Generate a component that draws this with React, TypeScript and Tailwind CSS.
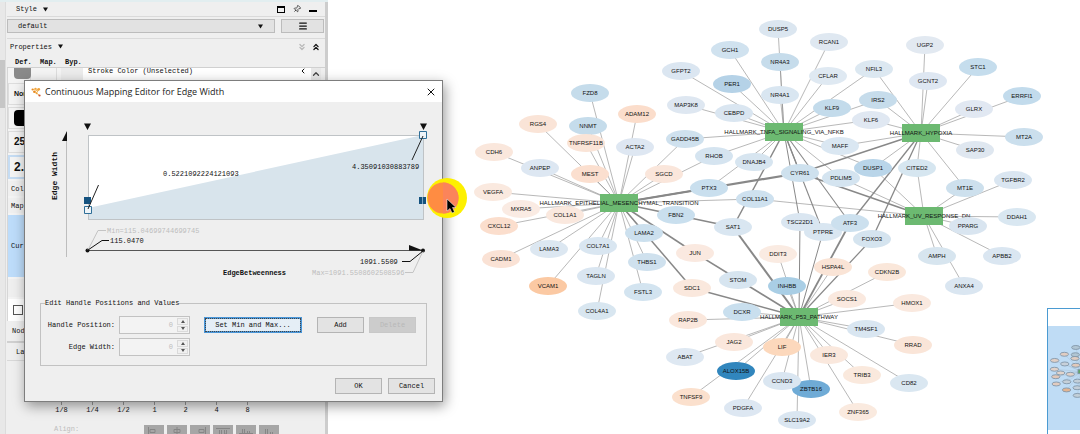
import { useState } from 'react'
import { ChevronLeft, ChevronUp, ChevronsDown, ChevronsUp, Menu, Pin, X } from 'lucide-react'

type GraphNode = [name: string, x: number, y: number, fill: string]
type Edge = [source: string, target: string, width: number]

const NODES: GraphNode[] = [
  ['DUSP5', 778, 29, '#dbe6f0'],
  ['GCH1', 730, 50, '#d0e2ef'],
  ['RCAN1', 829, 42, '#dfe8f1'],
  ['NR4A3', 780, 62, '#c6dceb'],
  ['GFPT2', 681, 71, '#dbe6f1'],
  ['PER1', 732, 84, '#b5d2e7'],
  ['CFLAR', 828, 76, '#dfe9f2'],
  ['NR4A1', 780, 95, '#d9e6f1'],
  ['MAP3K8', 686, 105, '#dee7f1'],
  ['CEBPD', 734, 113, '#dae6f1'],
  ['KLF9', 832, 108, '#c3dbeb'],
  ['NFIL3', 874, 69, '#dce8f1'],
  ['IRS2', 878, 100, '#c6dceb'],
  ['KLF6', 871, 120, '#e0e8f2'],
  ['GADD45B', 685, 139, '#cfe1ee'],
  ['HALLMARK_TNFA_SIGNALING_VIA_NFKB', 784, 132, 'hub'],
  ['UGP2', 925, 45, '#e2e9f1'],
  ['STC1', 978, 67, '#c5dded'],
  ['GCNT2', 928, 81, '#dee7f2'],
  ['ERRFI1', 1022, 96, '#c2dbec'],
  ['GLRX', 974, 109, '#e1e8f2'],
  ['HALLMARK_HYPOXIA', 921, 133, 'hub'],
  ['MT2A', 1024, 137, '#cbdfed'],
  ['SAP30', 975, 150, '#dfe7f0'],
  ['MAFF', 840, 146, '#dae7f2'],
  ['DUSP1', 873, 168, '#b9d5e9'],
  ['CITED2', 917, 168, '#d6e6f0'],
  ['MT1E', 965, 188, '#cde0ed'],
  ['TGFBR2', 1013, 180, '#dae6f1'],
  ['RHOB', 714, 156, '#d5e4f0'],
  ['DNAJB4', 754, 162, '#d7e5f0'],
  ['CYR61', 800, 173, '#cee1ee'],
  ['PDLIM5', 841, 178, '#d4e4f0'],
  ['PTX3', 709, 188, '#c9dfee'],
  ['COL11A1', 755, 199, '#cee1ef'],
  ['FZD8', 590, 93, '#c5dceb'],
  ['ADAM12', 637, 114, '#fbddcb'],
  ['RGS4', 538, 124, '#fae4d7'],
  ['NNMT', 588, 126, '#c5dceb'],
  ['TNFRSF11B', 586, 143, '#fae4d7'],
  ['ACTA2', 635, 147, '#dee7f2'],
  ['CDH6', 494, 152, '#fae7dc'],
  ['ANPEP', 540, 168, '#dde7f2'],
  ['MEST', 590, 174, '#fbdfcf'],
  ['SGCD', 664, 174, '#fae6db'],
  ['VEGFA', 493, 192, '#fae9df'],
  ['MXRA5', 521, 209, '#faebe3'],
  ['HALLMARK_EPITHELIAL_MESENCHYMAL_TRANSITION', 619, 203, 'hub'],
  ['COL1A1', 565, 215, '#fae8de'],
  ['CXCL12', 499, 226, '#fbdecd'],
  ['LAMA3', 549, 249, '#dce7f1'],
  ['COL7A1', 598, 246, '#d9e6f1'],
  ['FBN2', 676, 215, '#c9dfee'],
  ['LAMA2', 644, 233, '#cce0ee'],
  ['THBS1', 647, 262, '#cfe1ee'],
  ['TAGLN', 596, 276, '#dae6f1'],
  ['FSTL3', 643, 292, '#d3e4f0'],
  ['COL4A1', 597, 311, '#d8e6f0'],
  ['VCAM1', 548, 286, '#fbc9a3'],
  ['CADM1', 501, 259, '#fae2d5'],
  ['JUN', 695, 253, '#fae9e0'],
  ['SDC1', 692, 288, '#fae8dd'],
  ['SAT1', 733, 227, '#d9e6f1'],
  ['TSC22D1', 800, 222, '#dae6f1'],
  ['PTPRE', 823, 232, '#d9e6f1'],
  ['ATF3', 850, 223, '#cce0ee'],
  ['HALLMARK_UV_RESPONSE_DN', 924, 216, 'hub'],
  ['PPARG', 968, 226, '#d9e5f0'],
  ['DDAH1', 1017, 217, '#d9e7f1'],
  ['AMPH', 937, 256, '#d7e5ef'],
  ['APBB2', 1002, 256, '#dae6f1'],
  ['ANXA4', 964, 286, '#dae6f1'],
  ['FOXO3', 872, 239, '#d5e4ef'],
  ['CDKN2B', 887, 272, '#fae7da'],
  ['DDIT3', 778, 254, '#faebe2'],
  ['HSPA4L', 833, 267, '#fae4d6'],
  ['STOM', 738, 280, '#d7e5f0'],
  ['INHBB', 787, 286, '#a9cee5'],
  ['SOCS1', 847, 299, '#fae9df'],
  ['HMOX1', 912, 303, '#fae9df'],
  ['DCXR', 742, 312, '#c9dfee'],
  ['RAP2B', 688, 320, '#fae7dc'],
  ['HALLMARK_P53_PATHWAY', 799, 317, 'hub'],
  ['TM4SF1', 866, 329, '#d9e6f1'],
  ['RRAD', 913, 345, '#fae5d8'],
  ['JAG2', 734, 342, '#fae7dc'],
  ['LIF', 782, 347, '#fcd8bc'],
  ['IER3', 829, 355, '#fae8dd'],
  ['ABAT', 685, 357, '#dee8f2'],
  ['ALOX15B', 736, 371, '#3186bd'],
  ['TRIB3', 862, 375, '#fae9dd'],
  ['CD82', 909, 383, '#dae7f1'],
  ['ZBTB16', 811, 389, '#6fabd6'],
  ['CCND3', 782, 381, '#dae6f1'],
  ['TNFSF9', 691, 397, '#fbe0cd'],
  ['PDGFA', 743, 408, '#dde7f2'],
  ['SLC19A2', 797, 420, '#dae6f1'],
  ['ZNF365', 858, 412, '#faeadf'],
]

const HUBS: Record<string, string> = {
  emt: 'HALLMARK_EPITHELIAL_MESENCHYMAL_TRANSITION',
  tnfa: 'HALLMARK_TNFA_SIGNALING_VIA_NFKB',
  hypoxia: 'HALLMARK_HYPOXIA',
  uv: 'HALLMARK_UV_RESPONSE_DN',
  p53: 'HALLMARK_P53_PATHWAY',
}

// thin edges, one list per hub
const MEMBERS: Record<string, string> = {
  emt: 'CDH6 RGS4 FZD8 NNMT TNFRSF11B ADAM12 ACTA2 ANPEP MEST SGCD VEGFA MXRA5 COL1A1 CXCL12 LAMA3 COL7A1 LAMA2 THBS1 TAGLN FSTL3 COL4A1 VCAM1 CADM1 GADD45B RHOB COL11A1',
  tnfa: 'DUSP5 NR4A3 NR4A1 GCH1 RCAN1 PER1 CFLAR CEBPD GFPT2 MAP3K8 GADD45B RHOB DNAJB4 PTX3 MAFF DUSP1 PDLIM5 KLF9 IRS2 KLF6 NFIL3',
  hypoxia: 'NFIL3 IRS2 KLF6 UGP2 GCNT2 STC1 ERRFI1 GLRX MT2A SAP30 CITED2 MT1E MAFF DUSP1',
  uv: 'CITED2 MT1E TGFBR2 DDAH1 PPARG AMPH APBB2 ANXA4 DUSP1 PDLIM5 COL11A1',
  p53: 'HSPA4L DDIT3 INHBB DCXR RAP2B JAG2 ABAT LIF ALOX15B TNFSF9 CCND3 PDGFA SLC19A2 ZBTB16 IER3 TRIB3 ZNF365 CD82 RRAD TM4SF1 HMOX1 SOCS1 CDKN2B',
}

const HEAVY: Edge[] = [
  ['emt', 'CYR61', 2.2],
  ['emt', 'PTX3', 1.4],
  ['emt', 'SAT1', 1.6],
  ['emt', 'JUN', 1.5],
  ['emt', 'SDC1', 1.5],
  ['tnfa', 'SAT1', 1.5],
  ['tnfa', 'CYR61', 1.2],
  ['tnfa', 'TSC22D1', 1],
  ['tnfa', 'PTPRE', 1.1],
  ['tnfa', 'ATF3', 1.1],
  ['hypoxia', 'CYR61', 1.5],
  ['hypoxia', 'ATF3', 1.3],
  ['hypoxia', 'FOXO3', 1.3],
  ['uv', 'CYR61', 1.5],
  ['p53', 'TSC22D1', 1],
  ['p53', 'PTPRE', 1],
  ['p53', 'ATF3', 1.8],
  ['p53', 'FOXO3', 1.2],
  ['p53', 'SAT1', 2],
  ['p53', 'JUN', 1.6],
  ['p53', 'SDC1', 1.6],
]

const EDGES: Edge[] = [
  ...Object.entries(MEMBERS).flatMap(([hub, list]) => list.split(' ').map((name): Edge => [hub, name, 0.6])),
  ...HEAVY,
]

const byName = new Map(NODES.map(n => [n[0], n]))

function Graph({ labels = true }: { labels?: boolean }) {
  return (
    <>
      {EDGES.map(([hub, name, width]) => {
        const a = byName.get(HUBS[hub])!
        const b = byName.get(name)!
        return (
          <line key={hub + name} x1={a[1]} y1={a[2]} x2={b[1]} y2={b[2]} stroke="#888" strokeWidth={width} />
        )
      })}
      {NODES.map(([name, x, y, fill]) => (
        <g key={name}>
          {fill === 'hub' ? (
            <rect x={x - 19} y={y - 9} width={38} height={18} fill="#6cb971" />
          ) : (
            <ellipse cx={x} cy={y} rx={19} ry={9} fill={fill} />
          )}
          {labels && (
            <text x={x} y={y + 2} textAnchor="middle" fill="#111">{name}</text>
          )}
        </g>
      ))}
    </>
  )
}

function MappingChart() {
  return (
    <svg viewBox="25 102 417 188" className="block w-full text-[7px]" fill="#111">
      <path d="M66.5 132V257" stroke="#bdbdbd" />
      <path d="M67 131V141H62Z" />
      <text transform="translate(57 176) rotate(-90)" textAnchor="middle" className="text-[8px] font-bold">Edge Width</text>

      <rect x="88.5" y="135.5" width="335" height="84" fill="#fff" />
      <path d="M88 208L423 135V220H88Z" fill="#d8e4ec" />
      <rect x="88.5" y="135.5" width="335" height="84" fill="none" stroke="#bfc3c6" />
      <path d="M84 123.500H91L87.500 130ZM420 123.500H427L423.500 130Z" />
      <path d="M84 197H91V204H84ZM419 197H426V204H419Z" fill="#14527f" />
      <path d="M422.500 197V204" stroke="#7fa8c4" />
      <path d="M84.500 206.500H91.500V213.500H84.500ZM419.500 131.500H426.500V138.500H419.500Z" fill="#eef4f8" stroke="#2f6f98" />
      <path d="M88 209L98.500 185M423 136L412 160" stroke="#222" fill="none" />
      <text x="163" y="176">0.5221092224121093</text>
      <text x="352" y="169">4.35091030883789</text>

      <path d="M88 250.500H423" stroke="#555" />
      <path d="M409 245V250.500H423Z" />
      <circle cx="87.500" cy="250.500" r="2" />
      <circle cx="423" cy="250.500" r="2" />
      <path d="M88 250L98 230.500H106M423 251L413 272.500H405" stroke="#c4c4c4" fill="none" />
      <path d="M88 250L102 240.500H109M423 251L410 261.500H402" stroke="#111" fill="none" />
      <text x="107" y="233" fill="#bdbdbd">Min=115.04699744699745</text>
      <text x="110" y="243">115.0470</text>
      <text x="360" y="264">1091.5509</text>
      <text x="312" y="275" fill="#bdbdbd">Max=1091.5508602508596</text>
      <text x="223" y="275" className="font-bold">EdgeBetweenness</text>
    </svg>
  )
}

function SpinnerField({ id, label }: { id: string; label: string }) {
  return (
    <div className="flex items-center gap-1">
      <label htmlFor={id} className="w-[70px] text-right">{label}</label>
      <div className="flex h-[18px] w-[71px] border border-[#c2c2c2] bg-[#f3f3f3] p-px">
        <input id={id} defaultValue="0" disabled className="min-w-0 flex-1 bg-transparent pr-1 text-right text-[#bdbdbd]" />
        <div className="flex w-[11px] flex-col gap-px">
          {['M0 3L2 0L4 3Z', 'M0 0L2 3L4 0Z'].map(d => (
            <button key={d} type="button" aria-label={label} className="flex flex-1 items-center justify-center border border-[#dadada] bg-[#f0f0f0]">
              <svg viewBox="0 0 4 3" className="h-[3px] w-1" fill="#555"><path d={d} /></svg>
            </button>
          ))}
        </div>
      </div>
    </div>
  )
}

const buttonClass = 'h-4 w-[47px] border border-[#b4b4b4] bg-[#e3e3e3]'

function MappingDialog({ onClose }: { onClose: () => void }) {
  return (
    <div role="dialog" aria-label="Continuous Mapping Editor" className="absolute left-6 top-[80px] w-[419px] border border-[#7d7d7d] bg-[#efefef] shadow-[2px_4px_12px_rgba(0,0,0,0.4)]">
      <div className="flex h-[21px] items-center gap-1 bg-white pl-[6px] pr-[5px]">
        <svg viewBox="0 0 10 10" className="size-[10px]" fill="none">
          <path d="M1.500 2.500L4.500 2L8 2.500M3.500 4.500L8 2.500L5.500 6L8.500 8.500M3.500 4.500L5.500 6" stroke="#f0b050" />
          <circle cx="1.500" cy="2.500" r="1" fill="#e88a1e" />
          <circle cx="4.500" cy="1.800" r="1" fill="#f0a23a" />
          <circle cx="7.800" cy="2.200" r="1.300" fill="#f0a23a" />
          <circle cx="3.300" cy="4.800" r="1.200" fill="#e88a1e" />
          <circle cx="5.500" cy="6.300" r="0.900" fill="#f0a23a" />
          <circle cx="8.500" cy="8.500" r="1.100" fill="#c9542a" />
        </svg>
        <h2 className="flex-1 font-['Open_Sans',sans-serif] text-[9px] text-[#222]">Continuous Mapping Editor for Edge Width</h2>
        <button type="button" aria-label="Close" onClick={onClose}>
          <X className="size-3" strokeWidth={2} />
        </button>
      </div>

      <MappingChart />

      <fieldset className="mx-[15px] mt-2 h-[68px] border border-[#c2c2c2] px-1">
        <legend className="h-[10px] leading-[10px]">Edit Handle Positions and Values</legend>
        <div className="flex items-start pt-2">
          <div className="flex flex-col gap-1">
            <SpinnerField id="handle-position" label="Handle Position:" />
            <SpinnerField id="edge-width" label="Edge Width:" />
          </div>
          <button type="button" className="ml-[14px] mt-px h-4 w-[98px] border-2 border-[#4a96d8] bg-[#e5eef6] outline-1 -outline-offset-2 outline-dotted outline-[#444]">
            Set Min and Max...
          </button>
          <button type="button" className={`${buttonClass} ml-[15px] mt-px`}>Add</button>
          <button type="button" disabled className="ml-[5px] mt-px h-4 w-[47px] border border-[#c8c8c8] bg-[#cccccc] text-[#b8b8b8]">Delete</button>
        </div>
      </fieldset>

      <div className="flex justify-end gap-[6px] px-[7px] pb-[7px] pt-3">
        <button type="button" className={buttonClass} onClick={onClose}>OK</button>
        <button type="button" className={buttonClass} onClick={onClose}>Cancel</button>
      </div>
    </div>
  )
}

function DropArrow() {
  return (
    <svg viewBox="0 0 5 5" className="size-[5px]" fill="#111"><path d="M0 0.500H5L2.500 4.500Z" /></svg>
  )
}

function AlignIcon({ d }: { d: string }) {
  return (
    <button type="button" aria-label="Align" disabled className="flex h-4 w-5 items-center justify-center bg-[#a6a6a6]">
      <svg viewBox="0 0 14 12" className="h-3 w-[14px]" fill="none" stroke="#868686"><path d={d} /></svg>
    </button>
  )
}

const ALIGN_ICONS = [
  'M1.500 0V12M3 2.500H8V5.500H3ZM3 8.500H12',
  'M7 0V12M4 2.500H10V5.500H4ZM2 8.500H12',
  'M12.500 0V12M6 2.500H11V5.500H6ZM2 8.500H11',
  'M0 1.500H14M3.500 3V11H5.500V3M8.500 3V7H10.500V3',
  'M0 6.500H14M3.500 2V11H5.500V2M8.500 4V9H10.500V4',
  'M0 11.500H14M3.500 2V10H5.500V2M8.500 5V10H10.500V5',
]

function StylePanel() {
  return (
    <aside className="flex h-full w-[328px] shrink-0 overflow-hidden border-t-2 border-[#e2eef0] bg-[#efefef]">
      <div className="w-[6px] shrink-0 border-r border-[#dcdcdc] bg-[#e8e8e8] pt-[58px]">
        <div className="h-12 bg-[#c6c6c6]" />
      </div>

      <div className="flex min-w-0 flex-1 flex-col pl-px">
        <div className="flex h-[15px] shrink-0 items-center gap-[6px] border-b border-[#dadada] pl-[9px] pr-2">
          <span>Style</span>
          <DropArrow />
          <div className="ml-auto flex items-center gap-2">
            <div className="h-[7px] w-2 border border-t-2 border-black" />
            <Pin className="size-2 rotate-45" />
            <div className="mt-1 h-[2px] w-2 bg-black" />
          </div>
        </div>

        <div className="mt-[2px] flex h-[14px] shrink-0 gap-[6px] pr-px">
          <div className="relative flex flex-1">
            <select aria-label="Style" className="w-full appearance-none border border-[#bcbcbc] bg-[#e2e2e2] pl-[10px]">
              <option>default</option>
            </select>
            <span className="pointer-events-none absolute inset-y-0 right-3 flex items-center"><DropArrow /></span>
          </div>
          <button type="button" aria-label="Options" className="flex w-[43px] items-center justify-center border border-[#bcbcbc] bg-[#e2e2e2]">
            <Menu className="size-[10px]" strokeWidth={3} />
          </button>
        </div>

        <div className="mt-[5px] flex h-4 shrink-0 items-center border-t border-[#dadada] pl-[3px] pr-1">
          <span className="mr-[6px]">Properties</span>
          <DropArrow />
          <ChevronsDown className="ml-auto size-[10px] text-[#b8b8b8]" strokeWidth={3} />
          <ChevronsUp className="ml-1 size-[10px]" strokeWidth={3} />
        </div>
        <div className="flex h-[14px] shrink-0 items-end border-b border-[#d0d0d0] pl-2 font-bold">
          <span className="w-[25px]">Def.</span>
          <span className="w-[25px]">Map.</span>
          <span>Byp.</span>
        </div>

        {/* property list, scrolled so that the first row is cut */}
        <div className="flex h-[253px] shrink-0 pr-1">
          <div className="flex min-w-0 flex-1 flex-col gap-[2px] border-l border-[#d6d6d6] bg-[#f4f4f4]">
            <div className="flex h-[13px]">
              <div className="w-[23px] border-r border-[#ddd] pl-[6px]">
                <div className="h-[11px] w-[17px] rounded-b-sm bg-[#8a8a8a]" />
              </div>
              <div className="ml-1 w-[22px] border-r border-[#ddd]" />
              <div className="ml-1 w-[22px] bg-[#ececec]" />
              <div className="flex flex-1 bg-white pl-[5px] pr-1">
                <span className="leading-[6px]">Stroke Color (Unselected)</span>
                <ChevronLeft className="-mt-px ml-auto size-2" strokeWidth={3} />
              </div>
            </div>
            <div className="flex h-[22px] items-center border border-[#ddd] pl-[5px] font-['Liberation_Sans',sans-serif] font-bold">Nor</div>
            <div className="h-[22px] border border-[#ddd] py-[2px] pl-[5px]">
              <div className="h-4 w-8 rounded-sm bg-black" />
            </div>
            <div className="flex h-[22px] items-center border border-[#ddd] pl-[5px] font-['Liberation_Sans',sans-serif] text-[10px] font-bold">25</div>
            <div className="flex h-6 items-center border-2 border-[#c5dcf3] bg-[#f4f4f4] pl-1 font-['Liberation_Sans',sans-serif] text-[12px] font-bold">2.</div>
            <div className="flex h-[15px] items-center bg-[#f0f0f0] pl-[3px]">Col</div>
            <div className="flex h-[15px] items-center bg-[#f0f0f0] pl-[3px]">Map</div>
            <div className="flex h-[62px] items-center bg-[#bddcfa] pl-[3px]">Cur</div>
            <div className="h-[18px] bg-[#efefef]" />
            <div className="flex flex-1 items-center bg-white pl-[5px]">
              <input type="checkbox" aria-label="Lock width" className="size-[10px] appearance-none border border-[#555] bg-white" />
            </div>
          </div>
          <div className="w-[10px] bg-[#e8e8e8] pt-px">
            <ChevronUp className="size-[10px] text-[#444]" strokeWidth={3} />
          </div>
        </div>

        <div className="flex h-[22px] shrink-0 items-center border-b-2 border-[#d0d0d0] pl-[5px]">Nod</div>
        <div className="flex h-[18px] shrink-0 items-center border-b border-[#d8d8d8] pl-[9px]">La</div>

        <div className="ml-[39px] mt-10 grid w-[217px] shrink-0 grid-cols-7 justify-items-center leading-[10px]">
          {['1/8', '1/4', '1/2', '1', '2', '4', '8'].map(t => (
            <div key={t} className="flex flex-col items-center">
              <div className="h-1 w-px bg-[#9a9a9a]" />
              {t}
            </div>
          ))}
        </div>
        <div className="mt-[10px] flex shrink-0 items-start gap-[3px] pl-[47px] text-[#bdbdbd]">
          <span className="w-[87px] leading-[8px]">Align:</span>
          {ALIGN_ICONS.map(d => <AlignIcon key={d} d={d} />)}
        </div>
      </div>
      <div className="w-[3px] shrink-0 bg-[#cdcdcd]" />
    </aside>
  )
}

export default function App() {
  const [open, setOpen] = useState(true)

  return (
    <main className="relative flex h-screen overflow-hidden bg-white font-['Liberation_Mono',monospace] text-[7px] leading-[10px] text-[#111]">
      <StylePanel />

      <section aria-label="Network" className="relative min-w-0 flex-1">
        <svg viewBox="328 0 752 434" preserveAspectRatio="xMinYMin meet" className="block h-full w-full font-['Liberation_Sans',sans-serif] text-[6px]">
          <Graph />
        </svg>

        {/* bird's eye view */}
        <div className="absolute bottom-0 right-0 h-[126px] w-[33px] border-l border-t border-[#4b9bd2] bg-white pt-[17px]">
          <svg className="block h-[104px] w-full bg-[#bfdcf5]">
            <g transform="translate(-102 1) scale(0.22)" stroke="#8fa6bb" strokeWidth="4" className="brightness-90">
              <Graph labels={false} />
            </g>
          </svg>
        </div>
      </section>

      {open && <MappingDialog onClose={() => setOpen(false)} />}

      {/* click highlight and pointer */}
      <svg viewBox="0 0 40 40" className="pointer-events-none absolute left-[427px] top-[178px] size-10">
        <circle cx="20" cy="20" r="20" fill="#fdf000" />
        <circle cx="16" cy="20" r="15.500" fill="#ff8c42" />
        <path d="M16 4.500A15.500 15.500 0 0 1 16 35.500Z" fill="#fb845a" />
        <path d="M20 21V33L23 30.500L25 35L27.500 34L25.500 29.500H29Z" fill="#000" stroke="#fff" strokeWidth="0.500" />
      </svg>
    </main>
  )
}
